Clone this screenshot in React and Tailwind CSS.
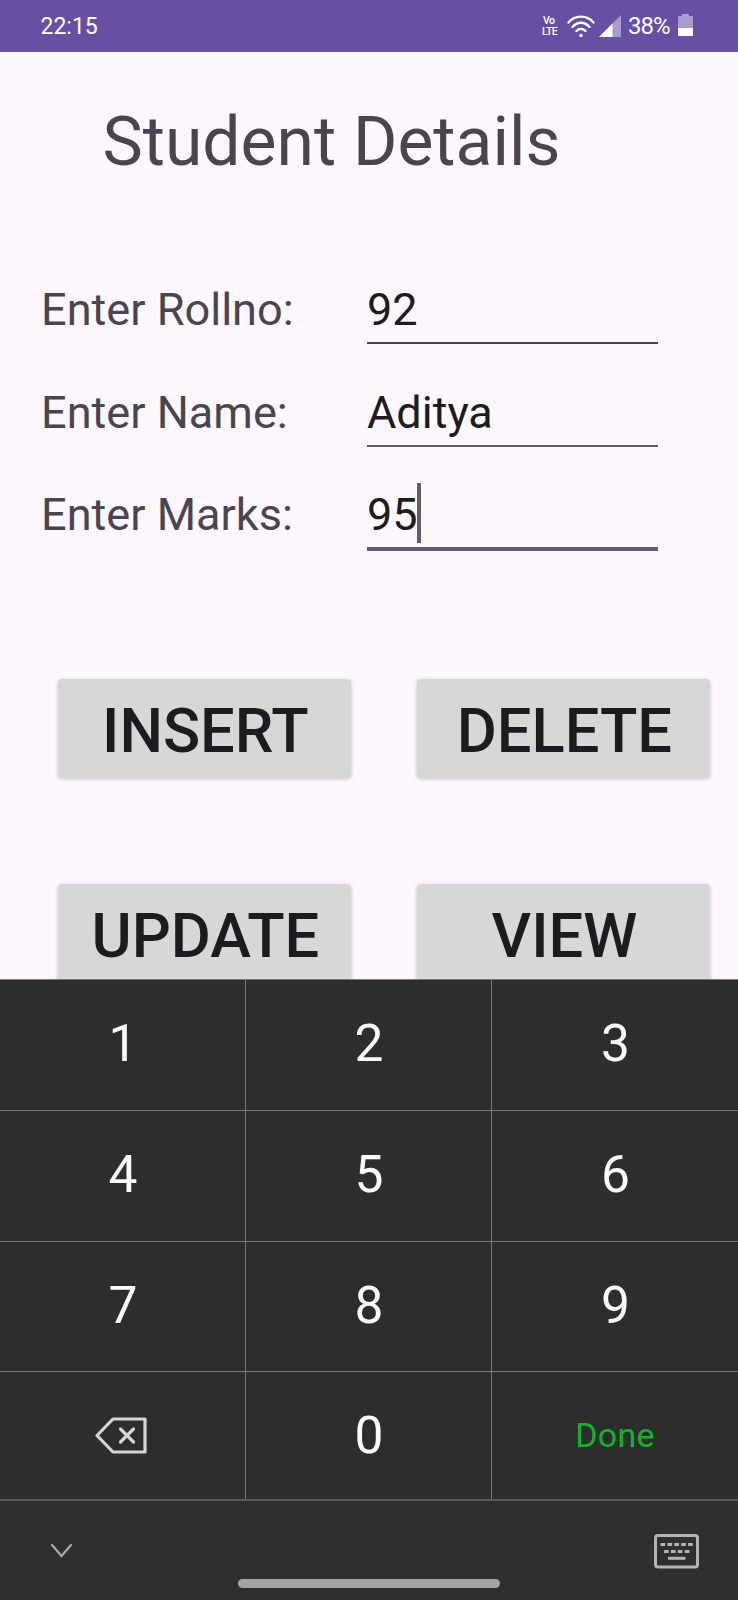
const fields = [
  { label: "Enter Rollno:", value: "92", row: "h-[103px]", line: "h-[2px] bg-[#4a4550]" },
  { label: "Enter Name:", value: "Aditya", row: "h-[102px]", line: "h-[2px] bg-[#5f5a65]" },
  { label: "Enter Marks:", value: "95", row: "h-[103px]", line: "h-[4px] bg-[#625b71]", focused: true },
];

const keys = ["1", "2", "3", "4", "5", "6", "7", "8", "9", "back", "0", "Done"];

function StatusBar() {
  return (
    <header className="flex h-[52px] shrink-0 items-center bg-[#6750a4] pl-[40.5px] text-white">
      <span className="flex-1 pt-px text-[23px] leading-[51px]">22:15</span>
      <div className="flex w-[17px] flex-col text-[10.5px] font-medium leading-[11px] tracking-[-0.5px]">
        <span className="pl-px">Vo</span>
        <span>LTE</span>
      </div>
      <svg className="-mt-px ml-[8px] h-[24px] w-[28px]" viewBox="0 0 28 24" fill="none" stroke="#fff" strokeWidth="2.3">
        <path d="M1.500 8.500C8 .6 20 .6 26.500 8.500M5.500 13C10.500 7.300 17.500 7.300 22.500 13M9.500 17C12 14.200 16 14.200 18.500 17" strokeLinecap="round" />
        <circle cx="14" cy="21.500" r="1.700" fill="#fff" stroke="none" />
      </svg>
      <svg className="-mt-px ml-1 h-[22px] w-[22px]" viewBox="0 0 22 22">
        <path d="M22 0V22H0z" fill="#a99cce" />
        <path d="M13.500 8.500V22H0z" fill="#fff" />
      </svg>
      <span className="ml-[7px] w-[43px] text-[24px] leading-[52px] tracking-[-1px]">38%</span>
      <svg className="-mt-[2px] ml-[7px] mr-[45px] h-[22px] w-[15px]" viewBox="0 0 15 22">
        <path d="M4 2V0h7v2h3q1 0 1 1v11H0V3q0-1 1-1z" fill="#a99cce" />
        <path d="M0 14h15v7q0 1-1 1H1q-1 0-1-1z" fill="#fff" />
      </svg>
    </header>
  );
}

function Field({ label, value, row, line, focused }) {
  return (
    <div className={`flex ${row}`}>
      <label className="w-[326px] pt-px text-[45.1px] leading-[54px] text-[#49454f]">{label}</label>
      <div className="flex w-[291px] flex-col">
        <div className="flex h-[60px] pt-px text-[45px] leading-[54px] text-[#1d1b20]">
          <span>{value}</span>
          {focused && <i className="-ml-px -mt-[5px] h-[60px] w-1 bg-[#625b71]" />}
        </div>
        <div className={line} />
      </div>
    </div>
  );
}

function ActionButton({ children }) {
  return (
    <button className="h-[99px] w-[293px] rounded-[4px] bg-[#d6d7d7] pl-px pt-[6px] text-[61.4px] font-medium leading-[93px] text-[#1d1b20] shadow-[0_1px_4px_rgba(0,0,0,0.22)]">
      {children}
    </button>
  );
}

function Key({ name }) {
  if (name === "back")
    return (
      <svg className="-ml-[4px] h-[38px] w-[52px]" viewBox="0 0 52 38" fill="none" stroke="#d6d6d6" strokeWidth="3.200" strokeLinejoin="round" strokeLinecap="round">
        <path d="M18 2H50V35H18L2 18.500z" />
        <path d="M25.500 12l13 13M38.500 12l-13 13" />
      </svg>
    );
  if (name === "Done") return <span className="text-[34px] tracking-[0.3px] text-[#12b32a]">Done</span>;
  return <span className={`pl-px text-[51.500px] text-[#fafafa] ${name === "0" ? "mt-px" : "-mt-[2px]"}`}>{name}</span>;
}

export default function App() {
  return (
    <div className="flex h-[1600px] w-[738px] flex-col overflow-hidden bg-[#fef7ff] font-[Roboto,sans-serif]">
      <StatusBar />
      <main className="h-[927px] shrink-0 overflow-hidden">
        <h1 className="pl-[102.5px] pt-[50px] text-[67.800px] leading-[80px] text-[#49454f]">Student Details</h1>
        <section className="pl-[41px] pt-[100px]">
          {fields.map((f) => (
            <Field key={f.label} {...f} />
          ))}
        </section>
        <section className="grid grid-cols-[293px_293px] gap-x-[66px] gap-y-[106px] pl-[58.400px] pt-[89px]">
          {["INSERT", "DELETE", "UPDATE", "VIEW"].map((t) => (
            <ActionButton key={t}>{t}</ActionButton>
          ))}
        </section>
      </main>
      <section className="grid h-[522px] shrink-0 grid-cols-[246px_246px_246px] grid-rows-[131px_131px_130px_128px] border-b-2 border-[#5c5c5c] bg-[#2d2d2d]">
        {keys.map((k, i) => (
          <div
            key={k}
            className={`flex items-center justify-center border-t border-[#7a7a7a] ${i % 3 < 2 ? "border-r" : ""}`}
          >
            <Key name={k} />
          </div>
        ))}
      </section>
      <footer className="flex flex-1 flex-col bg-[#2f2f2f]">
        <div className="flex h-[78px] items-start justify-between pl-[50px] pr-[39px] pt-[33px]">
          <svg className="mt-[9px] h-[15px] w-[23px]" viewBox="0 0 23 15" fill="none" stroke="#aaa" strokeWidth="2.200" strokeLinecap="round">
            <path d="M2 2l9.500 11L21 2" />
          </svg>
          <svg className="h-[35px] w-[45px]" viewBox="0 0 45 35" fill="none" stroke="#b4b4b4" strokeWidth="3">
            <rect x="1.500" y="1.500" width="42" height="31.500" rx="2.500" />
            <path d="M6.500 10.500h33" strokeDasharray="4.700 2.200" />
            <path d="M10 17.500h26" strokeDasharray="4.700 2.200" />
            <path d="M14 24.300h17.500" />
          </svg>
        </div>
        <div className="ml-[238px] h-[9px] w-[262px] rounded-full bg-[#a3a3a3]" />
      </footer>
    </div>
  );
}
